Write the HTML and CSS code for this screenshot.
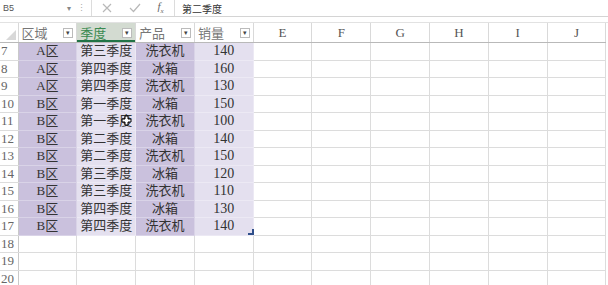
FILE: index.html
```html
<!DOCTYPE html>
<html lang="zh-CN">
<head>
    <meta charset="UTF-8">
    <title>销量表</title>
    <link rel="stylesheet" href="styles.css">
</head>
<body>
    <div class="formula-bar">
        <div class="name-box">
            <span class="name">B5</span>
            <span class="name-drop">▾</span>
        </div>
        <div class="grip">⋮</div>
        <div class="fx-buttons">
            <svg width="10" height="10" viewBox="0 0 10 10"><path d="M1 1 L9 9 M9 1 L1 9" stroke="#b8b8b8" stroke-width="1.2"/></svg>
            <svg width="12" height="10" viewBox="0 0 12 10"><path d="M1 5 L4.5 8.5 L11 1" stroke="#b8b8b8" stroke-width="1.2" fill="none"/></svg>
            <span class="fx">f<sub>x</sub></span>
        </div>
        <div class="formula">第二季度</div>
    </div>

    <div class="sheet">
        <table class="grid">
            <colgroup>
                <col class="rowhead-col">
                <col><col><col><col><col><col><col><col><col><col>
            </colgroup>
            <thead>
                <tr>
                    <th class="corner"><span class="tri"></span></th>
                    <th class="hname">区域<span class="filter">▾</span></th>
                    <th class="hname active">季度<span class="filter">▾</span></th>
                    <th class="hname">产品<span class="filter">▾</span></th>
                    <th class="hname">销量<span class="filter">▾</span></th>
                    <th>E</th><th>F</th><th>G</th><th>H</th><th>I</th><th>J</th>
                </tr>
            </thead>
            <tbody>
                <tr><td class="rn">7</td><td class="dk">A区</td><td class="lt">第三季度</td><td class="dk">洗衣机</td><td class="lt num">140</td><td></td><td></td><td></td><td></td><td></td><td></td></tr>
                <tr><td class="rn">8</td><td class="dk">A区</td><td class="lt">第四季度</td><td class="dk">冰箱</td><td class="lt num">160</td><td></td><td></td><td></td><td></td><td></td><td></td></tr>
                <tr><td class="rn">9</td><td class="dk">A区</td><td class="lt">第四季度</td><td class="dk">洗衣机</td><td class="lt num">130</td><td></td><td></td><td></td><td></td><td></td><td></td></tr>
                <tr><td class="rn">10</td><td class="dk">B区</td><td class="lt">第一季度</td><td class="dk">冰箱</td><td class="lt num">150</td><td></td><td></td><td></td><td></td><td></td><td></td></tr>
                <tr><td class="rn">11</td><td class="dk">B区</td><td class="lt cursor-cell">第一季度<svg class="cursor" width="11" height="11" viewBox="0 0 11 11"><path d="M4 1 H7 V4 H10 V7 H7 V10 H4 V7 H1 V4 H4 Z" fill="#fff" stroke="#000" stroke-width="1"/></svg></td><td class="dk">洗衣机</td><td class="lt num">100</td><td></td><td></td><td></td><td></td><td></td><td></td></tr>
                <tr><td class="rn">12</td><td class="dk">B区</td><td class="lt">第二季度</td><td class="dk">冰箱</td><td class="lt num">140</td><td></td><td></td><td></td><td></td><td></td><td></td></tr>
                <tr><td class="rn">13</td><td class="dk">B区</td><td class="lt">第二季度</td><td class="dk">洗衣机</td><td class="lt num">150</td><td></td><td></td><td></td><td></td><td></td><td></td></tr>
                <tr><td class="rn">14</td><td class="dk">B区</td><td class="lt">第三季度</td><td class="dk">冰箱</td><td class="lt num">120</td><td></td><td></td><td></td><td></td><td></td><td></td></tr>
                <tr><td class="rn">15</td><td class="dk">B区</td><td class="lt">第三季度</td><td class="dk">洗衣机</td><td class="lt num">110</td><td></td><td></td><td></td><td></td><td></td><td></td></tr>
                <tr><td class="rn">16</td><td class="dk">B区</td><td class="lt">第四季度</td><td class="dk">冰箱</td><td class="lt num">130</td><td></td><td></td><td></td><td></td><td></td><td></td></tr>
                <tr><td class="rn">17</td><td class="dk">B区</td><td class="lt">第四季度</td><td class="dk">洗衣机</td><td class="lt num last">140<span class="resize"></span></td><td></td><td></td><td></td><td></td><td></td><td></td></tr>
                <tr><td class="rn">18</td><td></td><td></td><td></td><td></td><td></td><td></td><td></td><td></td><td></td><td></td></tr>
                <tr><td class="rn">19</td><td></td><td></td><td></td><td></td><td></td><td></td><td></td><td></td><td></td><td></td></tr>
                <tr><td class="rn">20</td><td></td><td></td><td></td><td></td><td></td><td></td><td></td><td></td><td></td><td></td></tr>
            </tbody>
        </table>
    </div>
</body>
</html>
```

FILE: styles.css
```css
body {
    margin: 0;
    background: #fff;
    width: 608px;
    height: 285px;
    overflow: hidden;
    font-family: "Liberation Serif", "Noto Sans CJK SC", serif;
}

.formula-bar {
    display: flex;
    align-items: center;
    height: 16px;
    border-bottom: 1px solid #d4d4d4;
    background: #fff;
}
.name-box {
    display: flex;
    align-items: center;
    justify-content: space-between;
    width: 68px;
    padding-left: 3px;
    font-family: "Liberation Sans", sans-serif;
}
.name {
    font-size: 9px;
    color: #555;
}
.name-drop {
    font-size: 8px;
    color: #888;
}
.grip {
    width: 20px;
    text-align: center;
    font-size: 9px;
    color: #aaa;
}
.fx-buttons {
    display: flex;
    align-items: center;
    justify-content: space-around;
    width: 78px;
    height: 16px;
    padding: 0 2px;
    border-left: 1px solid #dcdcdc;
    border-right: 1px solid #dcdcdc;
}
.fx {
    font-family: "Liberation Serif", serif;
    font-style: italic;
    font-size: 11px;
    color: #666;
}
.fx sub {
    font-size: 7px;
}
.formula {
    padding-left: 7px;
    font-family: "Noto Sans CJK SC", sans-serif;
    font-size: 10px;
    color: #333;
}

.sheet {
    margin-top: 5px;
    border-top: 1px solid #e2e2e2;
}
.grid {
    border-collapse: collapse;
    table-layout: fixed;
    width: 606px;
}
.grid col {
    width: 58.8px;
}
.grid col.rowhead-col {
    width: 18px;
}
.grid th {
    height: 17px;
    padding: 0;
    font-weight: normal;
    font-size: 13px;
    color: #555;
    background: #fff;
    border-right: 1px solid #d9d9d9;
    border-bottom: 1px solid #b9b9b9;
    text-align: center;
}
.grid th.hname {
    position: relative;
    text-align: left;
    padding-left: 3px;
    font-family: "Noto Sans CJK SC", sans-serif;
    font-size: 13px;
    color: #777;
}
.grid th.active {
    background: #d3dbd1;
    color: #3a8a50;
    box-shadow: inset 0 -2px 0 #217346;
}
.filter {
    position: absolute;
    right: 3px;
    top: 5px;
    width: 8px;
    height: 8px;
    line-height: 7px;
    font-size: 7px;
    text-align: center;
    color: #444;
    background: #fff;
    border: 1px solid #bbb;
}
.corner {
    position: relative;
}
.tri {
    position: absolute;
    right: 2px;
    bottom: 2px;
    border-left: 10px solid transparent;
    border-bottom: 10px solid #d8d8d8;
}

.grid td {
    height: 16.5px;
    padding: 0;
    border-right: 1px solid #dcdcdc;
    border-bottom: 1px solid #dcdcdc;
    text-align: center;
    font-family: "Liberation Serif", "Noto Sans CJK SC", serif;
    font-size: 13px;
    line-height: 16px;
    color: #333;
}
.grid td.rn {
    text-align: left;
    padding-left: 1px;
    font-family: "Liberation Serif", serif;
    font-size: 13px;
    color: #666;
    border-right: 1px solid #c9c9c9;
}
.grid td.dk {
    background: #cac1dd;
    border-color: #d9d3e7;
}
.grid td.lt {
    background: #e4e0ef;
    border-color: #ece9f4;
}
.grid td.num {
    font-family: "Liberation Serif", serif;
    font-size: 14px;
}
.grid td.last,
.cursor-cell {
    position: relative;
}
.cursor {
    position: absolute;
    right: 3px;
    top: 2px;
}
.resize {
    position: absolute;
    right: -1px;
    bottom: 0;
    width: 4px;
    height: 4px;
    border-right: 2px solid #2f4f8a;
    border-bottom: 2px solid #2f4f8a;
}
```
